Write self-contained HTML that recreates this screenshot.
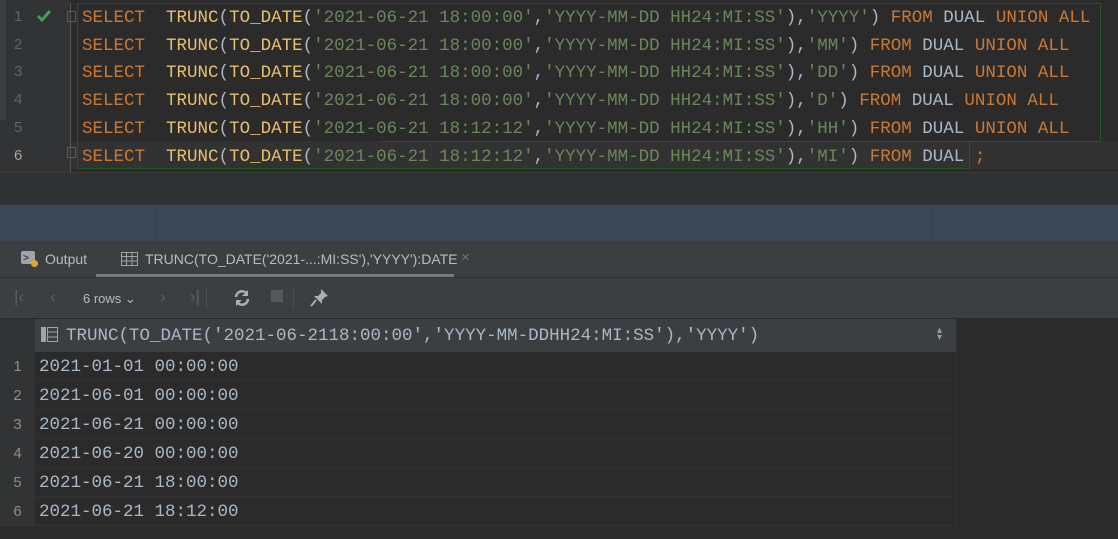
<!DOCTYPE html>
<html><head><meta charset="utf-8"><style>
*{margin:0;padding:0;box-sizing:border-box}
body{width:1118px;height:539px;background:#2b2b2b;position:relative;overflow:hidden;font-family:"Liberation Mono",monospace}
.abs{position:absolute}
.code{position:absolute;left:82px;font-size:17.5px;white-space:pre;line-height:20px;letter-spacing:0}
.k{color:#cc7832}.f{color:#e8bf6a}.s{color:#6a8759}.p{color:#a9b7c6}.d{color:#a9b7c6}
.ln{position:absolute;left:14px;font-size:15px;color:#606366;font-family:"Liberation Sans",sans-serif}
.ui{font-family:"Liberation Sans",sans-serif;color:#bbbbbb;font-size:14px}
.row{position:absolute;left:0;width:956px;height:29px;border-bottom:1px solid #323232}
.row .n{position:absolute;left:0;width:35px;height:29px;background:#313335;color:#8c8c8c;font-family:"Liberation Sans",sans-serif;font-size:15px;text-align:center;line-height:29px}
.row .v{position:absolute;left:39px;top:5px;font-size:17.5px;color:#a9b7c6;white-space:pre}
</style></head><body>
<div class="abs" style="left:0;top:0;width:70px;height:175px;background:#313335"></div>
<div class="abs" style="left:0;top:0;width:6px;height:120px;background:#3c3f41"></div>
<div class="abs" style="left:70px;top:141px;width:1048px;height:28px;background:#323232"></div>
<div class="abs" style="left:77px;top:3px;width:1024px;height:138px;border:1px solid #1f5a1f;border-bottom:none"></div>
<div class="abs" style="left:77px;top:141px;width:305px;height:28px;border-left:1px solid #1f5a1f;border-bottom:1px solid #1f5a1f"></div>
<div class="abs" style="left:382px;top:141px;width:719px;height:28px;border-top:1px solid #1f5a1f;border-bottom:none"></div>
<div class="abs" style="left:969px;top:141px;width:1px;height:28px;background:#1f5a1f"></div>
<div class="abs" style="left:77px;top:168px;width:893px;height:1px;background:#1f5a1f"></div>
<div class="abs" style="left:70px;top:3px;width:1px;height:172px;background:#555"></div>
<div class="ln" style="top:8px">1</div><div class="ln" style="top:36px">2</div><div class="ln" style="top:63px">3</div><div class="ln" style="top:91px">4</div><div class="ln" style="top:119px">5</div><div class="ln" style="top:147px;color:#a4a3a3">6</div>
<svg class="abs" style="left:36px;top:9px" width="16" height="14"><path d="M2 7 L6 11 L14 2" stroke="#499c54" stroke-width="3" fill="none"/></svg>
<div class="abs" style="left:67px;top:11px;width:9px;height:11px;border:1px solid #5a5d60;border-radius:1px"></div>
<div class="abs" style="left:67px;top:147px;width:9px;height:11px;border:1px solid #5a5d60;border-radius:1px"></div>
<div class="code" style="top:8px"><span class="k">SELECT</span>  <span class="f">TRUNC</span><span class="p">(</span><span class="f">TO_DATE</span><span class="p">(</span><span class="s">'2021-06-21 18:00:00'</span><span class="p">,</span><span class="s">'YYYY-MM-DD HH24:MI:SS'</span><span class="p">),</span><span class="s">'YYYY'</span><span class="p">)</span> <span class="k">FROM</span> <span class="d">DUAL</span> <span class="k">UNION ALL</span></div>
<div class="code" style="top:36px"><span class="k">SELECT</span>  <span class="f">TRUNC</span><span class="p">(</span><span class="f">TO_DATE</span><span class="p">(</span><span class="s">'2021-06-21 18:00:00'</span><span class="p">,</span><span class="s">'YYYY-MM-DD HH24:MI:SS'</span><span class="p">),</span><span class="s">'MM'</span><span class="p">)</span> <span class="k">FROM</span> <span class="d">DUAL</span> <span class="k">UNION ALL</span></div>
<div class="code" style="top:63px"><span class="k">SELECT</span>  <span class="f">TRUNC</span><span class="p">(</span><span class="f">TO_DATE</span><span class="p">(</span><span class="s">'2021-06-21 18:00:00'</span><span class="p">,</span><span class="s">'YYYY-MM-DD HH24:MI:SS'</span><span class="p">),</span><span class="s">'DD'</span><span class="p">)</span> <span class="k">FROM</span> <span class="d">DUAL</span> <span class="k">UNION ALL</span></div>
<div class="code" style="top:91px"><span class="k">SELECT</span>  <span class="f">TRUNC</span><span class="p">(</span><span class="f">TO_DATE</span><span class="p">(</span><span class="s">'2021-06-21 18:00:00'</span><span class="p">,</span><span class="s">'YYYY-MM-DD HH24:MI:SS'</span><span class="p">),</span><span class="s">'D'</span><span class="p">)</span> <span class="k">FROM</span> <span class="d">DUAL</span> <span class="k">UNION ALL</span></div>
<div class="code" style="top:119px"><span class="k">SELECT</span>  <span class="f">TRUNC</span><span class="p">(</span><span class="f">TO_DATE</span><span class="p">(</span><span class="s">'2021-06-21 18:12:12'</span><span class="p">,</span><span class="s">'YYYY-MM-DD HH24:MI:SS'</span><span class="p">),</span><span class="s">'HH'</span><span class="p">)</span> <span class="k">FROM</span> <span class="d">DUAL</span> <span class="k">UNION ALL</span></div>
<div class="code" style="top:147px"><span class="k">SELECT</span>  <span class="f">TRUNC</span><span class="p">(</span><span class="f">TO_DATE</span><span class="p">(</span><span class="s">'2021-06-21 18:12:12'</span><span class="p">,</span><span class="s">'YYYY-MM-DD HH24:MI:SS'</span><span class="p">),</span><span class="s">'MI'</span><span class="p">)</span> <span class="k">FROM</span> <span class="d">DUAL</span> <span class="k">;</span></div>
<div class="abs" style="left:0;top:172px;width:1118px;height:33px;background:#2f3133;border-top:1px solid #3a3a3a"></div>
<div class="abs" style="left:0;top:205px;width:1118px;height:36px;background:#3b4754"></div>
<div class="abs" style="left:155px;top:205px;width:1px;height:36px;background:#33404c"></div>
<div class="abs" style="left:931px;top:205px;width:1px;height:36px;background:#33404c"></div>
<div class="abs" style="left:0;top:241px;width:1118px;height:37px;background:#3c3f41;border-bottom:1px solid #323232"></div>
<div class="abs" style="left:21px;top:251px;width:14px;height:13px;background:#a0a4a8;border-radius:2px"></div>
<div class="abs" style="left:23px;top:253px;color:#3c3f41;font-size:10px;font-family:'Liberation Sans';font-weight:bold">&gt;</div>
<div class="abs" style="left:31px;top:260px;width:7px;height:7px;background:#e2a23a;border-radius:50%"></div>
<div class="abs ui" style="left:45px;top:251px">Output</div>
<svg class="abs" style="left:121px;top:252px" width="17" height="14"><rect x="0.5" y="0.5" width="16" height="13" fill="none" stroke="#a0a4a8"/><path d="M0 4.5H17M0 9H17M5.5 0V14M11 0V14" stroke="#a0a4a8"/></svg>
<div class="abs ui" style="left:145px;top:251px">TRUNC(TO_DATE('2021-...:MI:SS'),'YYYY'):DATE</div>
<div class="abs" style="left:461px;top:249px;color:#6f7274;font-size:15px;font-family:'Liberation Sans'">×</div>
<div class="abs" style="left:96px;top:274px;width:358px;height:3px;background:#747a80"></div>
<div class="abs" style="left:0;top:278px;width:1118px;height:40px;background:#3c3f41"></div>
<div class="abs ui" style="left:14px;top:287px;color:#5c6064;font-size:17px">|‹</div>
<div class="abs ui" style="left:50px;top:287px;color:#5c6064;font-size:17px">‹</div>
<div class="abs ui" style="left:83px;top:291px;font-size:13px">6 rows ⌄</div>
<div class="abs ui" style="left:160px;top:287px;color:#5c6064;font-size:17px">›</div>
<div class="abs ui" style="left:190px;top:287px;color:#5c6064;font-size:17px">›|</div>
<div class="abs" style="left:206px;top:287px;width:1px;height:22px;background:#4a4d4f"></div>
<svg class="abs" style="left:233px;top:289px" width="18" height="18"><path d="M3 8a6 6 0 0 1 11-3M15 10a6 6 0 0 1-11 3" stroke="#a9afb4" stroke-width="2.5" fill="none"/><path d="M15 1v6h-6zM3 17v-6h6z" fill="#a9afb4"/></svg>
<div class="abs" style="left:271px;top:290px;width:12px;height:12px;background:#55585b"></div>
<div class="abs" style="left:293px;top:287px;width:1px;height:22px;background:#4a4d4f"></div>
<svg class="abs" style="left:310px;top:287px" width="20" height="20"><path d="M11 2l7 7-3 1-3 3 0 4-8-8 4 0 3-3z" fill="#a9afb4"/><path d="M6 13L1 19" stroke="#a9afb4" stroke-width="2"/></svg>
<div class="abs" style="left:0;top:318px;width:1118px;height:221px;background:#2b2b2b"></div>
<div class="abs" style="left:0;top:319px;width:956px;height:33px;background:#3c3f41"></div>
<div class="abs" style="left:0;top:319px;width:35px;height:33px;background:#313335"></div>
<svg class="abs" style="left:41px;top:327px" width="17" height="15"><rect x="0" y="0" width="5" height="15" fill="#a0a4a8"/><rect x="6.5" y="0.5" width="10" height="14" fill="none" stroke="#a0a4a8"/><path d="M6 5H17M6 10H17" stroke="#a0a4a8"/></svg>
<div class="abs" style="left:66px;top:326px;font-size:17.5px;color:#a9b7c6;white-space:pre">TRUNC(TO_DATE('2021-06-2118:00:00','YYYY-MM-DDHH24:MI:SS'),'YYYY')</div>
<div class="abs ui" style="left:937px;top:327px;font-size:10px;color:#9a9da0;line-height:7px">▴<br>▾</div>
<div class="row" style="top:352px"><div class="n">1</div><div class="v">2021-01-01 00:00:00</div></div>
<div class="row" style="top:381px"><div class="n">2</div><div class="v">2021-06-01 00:00:00</div></div>
<div class="row" style="top:410px"><div class="n">3</div><div class="v">2021-06-21 00:00:00</div></div>
<div class="row" style="top:439px"><div class="n">4</div><div class="v">2021-06-20 00:00:00</div></div>
<div class="row" style="top:468px"><div class="n">5</div><div class="v">2021-06-21 18:00:00</div></div>
<div class="row" style="top:497px"><div class="n">6</div><div class="v">2021-06-21 18:12:00</div></div>
<div class="abs" style="left:956px;top:319px;width:1px;height:207px;background:#323232"></div>
</body></html>
